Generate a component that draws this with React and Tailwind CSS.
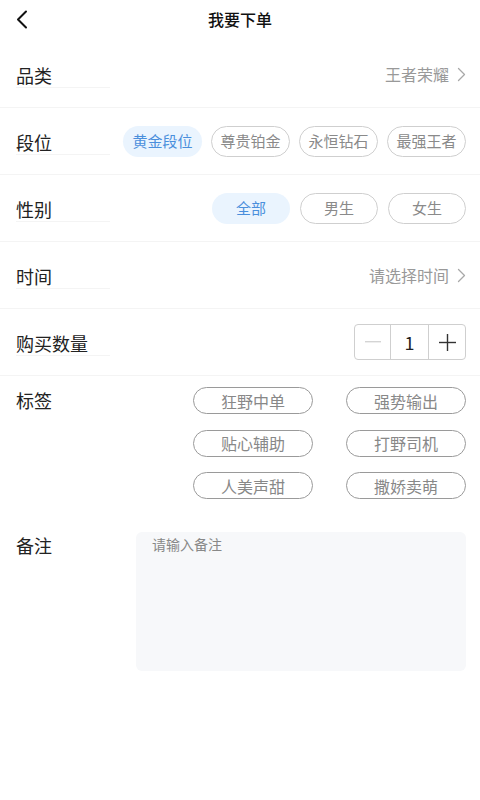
import React from "react";

const font = { fontFamily: '"Noto Sans CJK SC", "Noto Sans", sans-serif' };

function Chevron() {
  return (
    <svg width="9" height="15" viewBox="0 0 9 15" fill="none" className="ml-[8px]">
      <path d="M1.5 1.5 L7.5 7.5 L1.5 13.5" stroke="#a8a8a8" strokeWidth="1.3" strokeLinecap="round" strokeLinejoin="round" />
    </svg>
  );
}

function Label({ children, line = true }) {
  return (
    <div className={"w-[94px] h-[25px] text-[18px] leading-[24px] text-[#222] " + (line ? "border-b border-[#f4f4f4]" : "")}>
      {children}
    </div>
  );
}

function Row({ label, children }) {
  return (
    <div className="h-[67px] flex items-center justify-between pl-4 pr-[14px] border-b border-[#f4f4f4]">
      <div className="mt-[2px]"><Label>{label}</Label></div>
      <div className="flex items-center">{children}</div>
    </div>
  );
}

export default function App() {
  const ranks = ["黄金段位", "尊贵铂金", "永恒钻石", "最强王者"];
  const genders = ["全部", "男生", "女生"];
  const tags = ["狂野中单", "强势输出", "贴心辅助", "打野司机", "人美声甜", "撒娇卖萌"];
  return (
    <div className="w-[480px] h-[800px] bg-white" style={font}>
      <div className="h-[41px] relative flex items-center justify-center">
        <svg className="absolute left-[15px] top-[10px]" width="14" height="20" viewBox="0 0 14 20" fill="none">
          <path d="M11 1.5 L3 9.5 L11 17.5" stroke="#111" strokeWidth="2" strokeLinecap="round" strokeLinejoin="round" />
        </svg>
        <div className="text-[16px] font-medium text-[#111] leading-[22px] -mt-[4px]">我要下单</div>
      </div>

      <Row label="品类">
        <span className="text-[16px] text-[#999]">王者荣耀</span>
        <Chevron />
      </Row>

      <Row label="段位">
        <div className="flex gap-[9px]">
          {ranks.map((r, i) => (
            <div
              key={r}
              className={
                "w-[79px] h-[31px] rounded-full flex items-center justify-center text-[15px] " +
                (i === 0 ? "bg-[#eaf4fe] text-[#4a8fdc]" : "border border-[#cfcfcf] text-[#8a8a8a]")
              }
            >
              {r}
            </div>
          ))}
        </div>
      </Row>

      <Row label="性别">
        <div className="flex gap-[10px]">
          {genders.map((g, i) => (
            <div
              key={g}
              className={
                "w-[78px] h-[31px] rounded-full flex items-center justify-center text-[15px] " +
                (i === 0 ? "bg-[#eaf4fe] text-[#4a8fdc]" : "border border-[#cfcfcf] text-[#8a8a8a]")
              }
            >
              {g}
            </div>
          ))}
        </div>
      </Row>

      <Row label="时间">
        <span className="text-[16px] text-[#999]">请选择时间</span>
        <Chevron />
      </Row>

      <Row label="购买数量">
        <div className="flex h-[36px] border border-[#cfcfcf] rounded-[4px] overflow-hidden">
          <div className="w-[36px] flex items-center justify-center border-r border-[#cfcfcf]">
            <svg width="16" height="2" viewBox="0 0 16 2"><rect width="16" height="1.4" fill="#d4d4d4" /></svg>
          </div>
          <div className="w-[38px] flex items-center justify-center text-[18px] text-[#222] border-r border-[#cfcfcf]">1</div>
          <div className="w-[36px] flex items-center justify-center">
            <svg width="17" height="17" viewBox="0 0 17 17">
              <rect x="0" y="7.8" width="17" height="1.4" fill="#333" />
              <rect x="7.8" y="0" width="1.4" height="17" fill="#333" />
            </svg>
          </div>
        </div>
      </Row>

      <div className="flex justify-between items-start pl-4 pr-[14px] pt-[11px]">
        <div className="mt-[1px]"><Label line={false}>标签</Label></div>
        <div className="grid grid-cols-2 gap-x-[33px] gap-y-[15.5px]">
          {tags.map((t) => (
            <div
              key={t}
              className="w-[120px] h-[27px] rounded-full border border-[#9a9a9a] flex items-center justify-center text-[16px] text-[#888]"
            >
              {t}
            </div>
          ))}
        </div>
      </div>

      <div className="flex justify-between items-start pl-4 pr-[14px] mt-[33px]">
        <div className="mt-[1px]"><Label line={false}>备注</Label></div>
        <div className="w-[330px] h-[139px] bg-[#f7f8fa] rounded-[6px] px-4 pt-[2px] text-[14px] leading-[20px] text-[#888]">
          请输入备注
        </div>
      </div>
    </div>
  );
}
